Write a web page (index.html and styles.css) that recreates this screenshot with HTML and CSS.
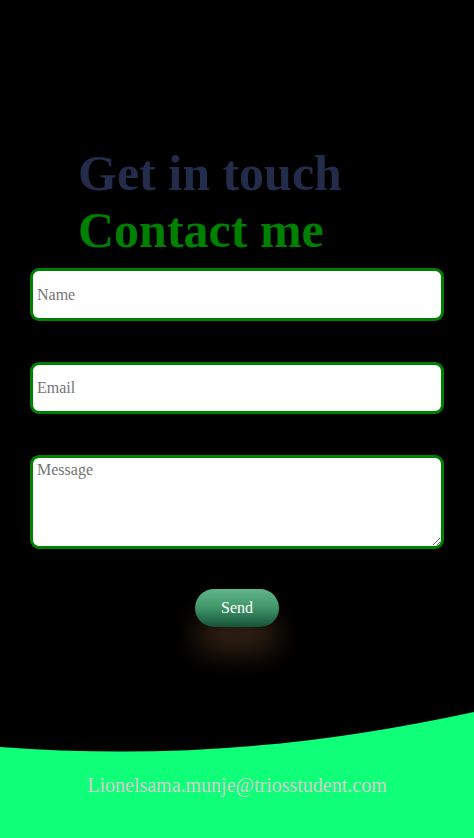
FILE: index.html
```html
<!DOCTYPE html>
<html lang="en">
<head>
<meta charset="utf-8">
<title>Contact</title>
<link rel="stylesheet" href="styles.css">
</head>
<body>
<main class="page">
  <section class="contact">
    <div class="titles">
      <h1 class="title title-sub">Get in touch</h1>
      <h2 class="title title-main">Contact me</h2>
    </div>
    <form class="form">
      <input class="field field-name" type="text" placeholder="Name">
      <input class="field field-email" type="email" placeholder="Email">
      <textarea class="field field-message" placeholder="Message"></textarea>
      <div class="actions">
        <button class="send" type="button">Send</button>
      </div>
    </form>
  </section>
  <footer class="footer">
    <svg class="wave" viewBox="0 0 474 126" preserveAspectRatio="none" aria-hidden="true">
      <path d="M0 35 C150 46 300 38 474 0 L474 126 L0 126 Z" fill="#10ff78"/>
    </svg>
    <p class="mail">Lionelsama.munje@triosstudent.com</p>
  </footer>
</main>
</body>
</html>
```

FILE: styles.css
```css
* { box-sizing: border-box; }
html, body { margin: 0; padding: 0; background: #000; }
body { font-family: "Liberation Serif", "Times New Roman", serif; }

.page {
  min-height: 838px;
  display: flex;
  flex-direction: column;
}

.contact {
  padding-top: 145px;
}

.titles {
  padding-left: 78px;
}

.title {
  margin: 0;
  font-size: 50px;
  line-height: 57px;
  font-weight: bold;
}
.title-sub { color: #232c4b; }
.title-main { color: #008000; }

.form {
  display: flex;
  flex-direction: column;
  gap: 41px;
  padding: 9px 30px 0;
}

.field {
  display: block;
  width: 414px;
  border: 3px solid #008000;
  border-radius: 9px;
  background: #fff;
  font-family: "Liberation Serif", "Times New Roman", serif;
  font-size: 16px;
  color: #222;
  padding: 0 4px;
  outline: none;
}
.field::placeholder { color: #757575; }
.field-name { height: 53px; }
.field-email { height: 52px; }
.field-message {
  height: 94px;
  padding-top: 3px;
  resize: vertical;
}

.actions {
  display: flex;
  justify-content: center;
  margin-top: -1px;
}

.send {
  width: 84px;
  height: 38px;
  border: none;
  border-radius: 19px;
  background: linear-gradient(to bottom, #61b68c 0%, #3f9468 50%, #175239 100%);
  color: #fff;
  font-family: "Liberation Serif", "Times New Roman", serif;
  font-size: 16px;
  font-weight: normal;
  box-shadow: 0 26px 28px rgba(90, 60, 35, 0.55);
  cursor: pointer;
}

.footer {
  margin-top: auto;
  position: relative;
  height: 126px;
}
.wave {
  position: absolute;
  left: 0;
  top: 0;
  width: 100%;
  height: 100%;
  display: block;
}
.mail {
  position: relative;
  margin: 0;
  padding-top: 62px;
  text-align: center;
  font-size: 20px;
  line-height: 22px;
  color: #cfcfcf;
}
```
